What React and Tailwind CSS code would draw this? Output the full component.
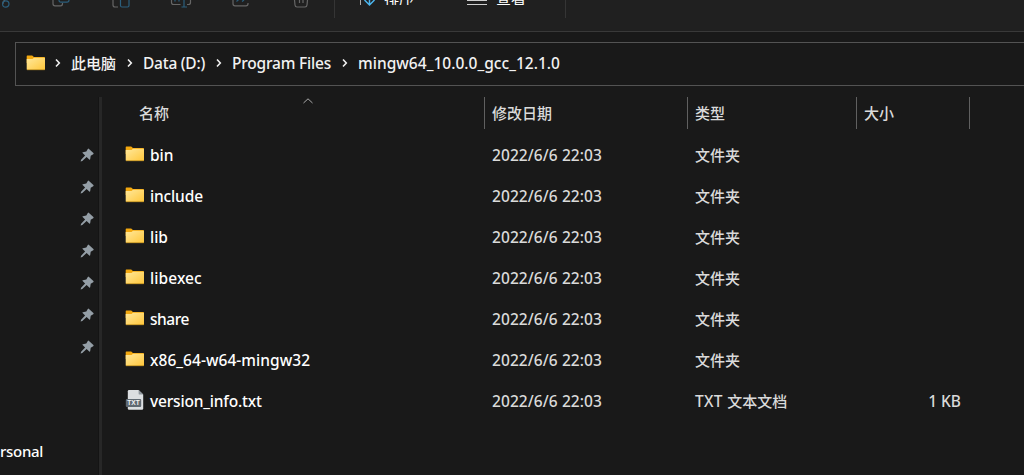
const FONT = "font-['Noto_Sans','Noto_Sans_CJK_SC',sans-serif]";

function Folder({ className = "" }) {
  return (
    <svg className={`h-[16px] w-[20px] shrink-0 ${className}`} viewBox="0 0 20 16">
      <defs>
        <linearGradient id="fold" x1="0" y1="0" x2="1" y2="1">
          <stop offset="0" stopColor="#ffe89b" />
          <stop offset="1" stopColor="#ffc63a" />
        </linearGradient>
      </defs>
      <path d="M1.3.5h4.9l1.7 1.6h10.2q.9 0 .9 1V8H.7V1.2Q.7.5 1.3.5Z" fill="#f3a80f" />
      <path d="M.7 4h5.8l1.5-1.2h11v11.4q0 .8-.8.8H1.5q-.8 0-.8-.8Z" fill="url(#fold)" />
      <path d="M1 14.7h17.7" stroke="#b98a1e" strokeWidth=".8" />
    </svg>
  );
}

function TxtFile() {
  return (
    <svg className="-mt-[3px] h-[20px] w-[20px] shrink-0" viewBox="0 0 20 20">
      <path d="M4 0h9.600L18.200 4.600V18.600q0 1.200-1.200 1.200H4Q2.800 19.800 2.800 18.600V1.200Q2.800 0 4 0Z" fill="#dcdfe1" />
      <path d="M13.600 0V3.400q0 1.200 1.200 1.200H18.200Z" fill="#8f979d" />
      <rect x="0.800" y="9" width="15.400" height="8" rx="1" fill="#606a72" />
      <text x="8.500" y="15.400" textAnchor="middle" fontFamily="Liberation Sans" fontWeight="bold" fontSize="6.600" fill="#f0f2f4">TXT</text>
    </svg>
  );
}

function Pin() {
  return (
    <svg className="h-[14px] w-[14px]" viewBox="0 0 14 14">
      <path d="M7.800.9q.6-.6 1.200 0l4.400 4.200q.6.700-.2 1.100L10.700 7.800l-.5 3.300q-.2.900-.9.300L6.600 8.900 2.300 13 .600 13.500 1.100 11.800 5.100 7.500 2.600 5.100q-.6-.7.300-.9L6.300 3.600Z" fill="#949ea6" />
    </svg>
  );
}

function Chevron() {
  return (
    <svg className="h-[10px] w-[6px] shrink-0" viewBox="0 0 6 10">
      <path d="M1 1.500 4.300 5 1 8.500" fill="none" stroke="#f0f0f0" strokeWidth="1.600" />
    </svg>
  );
}

function Toolbar() {
  return (
    <header className="h-[32px] shrink-0 overflow-hidden border-b border-[#393939] bg-[#202020]">
      <div className="flex h-[18px]">
        <svg className="h-[18px] w-[334px] shrink-0" viewBox="0 0 334 18" fill="none" strokeWidth="1.200">
          <path d="M2.800 4Q3 1 5 0" stroke="#666" />
          <circle cx="5.800" cy="4" r="3.200" stroke="#2b5f7d" />
          <path d="M53 0v3.800q0 2 2 2h5.500q2 0 2-2V3" stroke="#666" />
          <path d="M59 0q0 2.200 2 2.200h6q2 0 2-2.200" stroke="#2b5f7d" />
          <path d="M113 0v5q0 2 2 2h3" stroke="#666" />
          <path d="M120.500 0v5.500q0 1.500 1.500 1.500h5.500q1.500 0 1.500-1.500V0" stroke="#2b5f7d" />
          <path d="M171.500 0v2.500q0 2 2 2h7M187 4.500h1.500q2 0 2-2V0" stroke="#666" />
          <path d="M184 0v7M181.500 7h5.500M175 0v1.500M179 0v1.500" stroke="#2b5f7d" />
          <path d="M233 0v3.800q0 2 2 2h11q2 0 2-2V3" stroke="#666" />
          <path d="M236.500 1.500q1-1 2-1.500M242 1.500l2-1.500" stroke="#2b5f7d" />
          <path d="M294.500 0l.5 5q.2 2 2 2h8q1.800 0 2-2l.5-5M299.500 0v3M303 0v3" stroke="#666" />
        </svg>
        <div className="flex w-[232px] shrink-0 border-x border-[#353535]">
          <svg className="h-[10px] w-[49px] shrink-0" viewBox="335 0 49 10" fill="none">
            <path d="M360.500 0v5" stroke="#aaa" />
            <path d="M369.500 0v4.500M364.500 0l5 5 5-5" stroke="#4cb5ed" strokeWidth="1.500" />
          </svg>
          <div className="h-[5px] w-[83px] overflow-hidden text-[15px] leading-[20px] text-white"><div className="-mt-[12px]">排序</div></div>
          <svg className="h-[10px] w-[29px] shrink-0" viewBox="467 0 29 10"><path d="M467 .5h20M467 4.500h20" stroke="#d0d0d0" /></svg>
          <div className="h-[5px] overflow-hidden text-[15px] leading-[20px] text-white"><div className="-mt-[12px]">查看</div></div>
        </div>
      </div>
    </header>
  );
}

function Address() {
  return (
    <nav className="ml-[15px] mt-[10px] flex h-[44px] shrink-0 items-center border border-r-0 border-[#535353] pb-[2px] pl-[10px] text-[15.5px] font-medium text-[#f2f2f2]">
      <Folder />
      <span className="ml-[9px] flex"><Chevron /></span>
      <span className="ml-[10px] w-[56px] text-[15px]">此电脑</span><Chevron />
      <span className="ml-[10px] mt-[2px] w-[73px] whitespace-nowrap tracking-[-0.25px]">Data (D:)</span><Chevron />
      <span className="ml-[10px] mt-[2px] w-[110px] whitespace-nowrap tracking-[-0.2px]">Program Files</span><Chevron />
      <span className="ml-[10px] mt-[2px] whitespace-nowrap tracking-[0.03px]">mingw64_10.0.0_gcc_12.1.0</span>
    </nav>
  );
}

const files = [
  { name: "bin", fit: "" },
  { name: "include", fit: "tracking-[-0.15px]" },
  { name: "lib", fit: "" },
  { name: "libexec", fit: "tracking-[0.08px]" },
  { name: "share", fit: "tracking-[-0.45px]" },
  { name: "x86_64-w64-mingw32", fit: "tracking-[0.05px]" },
  { name: "version_info.txt", fit: "tracking-[-0.18px]", txt: true },
];

function Row({ name, fit, txt }) {
  return (
    <div className="flex h-[41px] items-center text-[15px] font-medium text-[#dadada]">
      <div className="flex w-[367px] items-center gap-[5px] text-[15.5px] text-white">
        {txt ? <TxtFile /> : <Folder className="-mt-[4px]" />}
        <span className={fit}>{name}</span>
      </div>
      <div className="w-[203px] text-[15.5px] tracking-[0.08px]">2022/6/6 22:03</div>
      <div className="w-[169px]">{txt ? <><span className="text-[15.5px] tracking-[0.3px]">TXT </span>文本文档</> : "文件夹"}</div>
      <div className="w-[97px] text-right text-[15.5px]">{txt ? "1 KB" : ""}</div>
    </div>
  );
}

export default function App() {
  return (
    <div className={`flex h-[475px] w-[1024px] flex-col overflow-hidden bg-[#191919] ${FONT}`}>
      <Toolbar />
      <Address />
      <main className="mt-[11px] flex h-[378px]">
        <aside className="flex w-[98px] shrink-0 flex-col">
          <div className="mt-[42px] flex flex-col items-end pr-[4px]">
            {files.map((f) => <div key={f.name} className="flex h-[32px] items-center"><Pin /></div>)}
          </div>
          <div className="mt-[77px] text-[15px] font-medium leading-[22px] tracking-[-0.3px] text-white">rsonal</div>
        </aside>
        <div className="w-[4px] shrink-0 border-l border-[#141414] bg-[#272727]" />
        <section className="flex-1">
          <div className="flex h-[32px] text-[15px] font-medium leading-[32px] text-[#dadada]">
            <div className="flex w-[383px] shrink-0 border-r border-[#606060] pl-[37px]">
              <span className="w-[164px]">名称</span>
              <svg className="mt-[1px] h-[6px] w-[10px]" viewBox="0 0 10 6"><path d="M.5 5 5 .8 9.500 5" fill="none" stroke="#aaa" /></svg>
            </div>
            <div className="w-[203px] shrink-0 border-r border-[#606060] pl-[7px]">修改日期</div>
            <div className="w-[169px] shrink-0 border-r border-[#606060] pl-[7px]">类型</div>
            <div className="w-[113px] shrink-0 border-r border-[#606060] pl-[7px]">大小</div>
          </div>
          <div className="mt-[6px] pl-[23px]">{files.map((f) => <Row key={f.name} {...f} />)}</div>
        </section>
      </main>
    </div>
  );
}
